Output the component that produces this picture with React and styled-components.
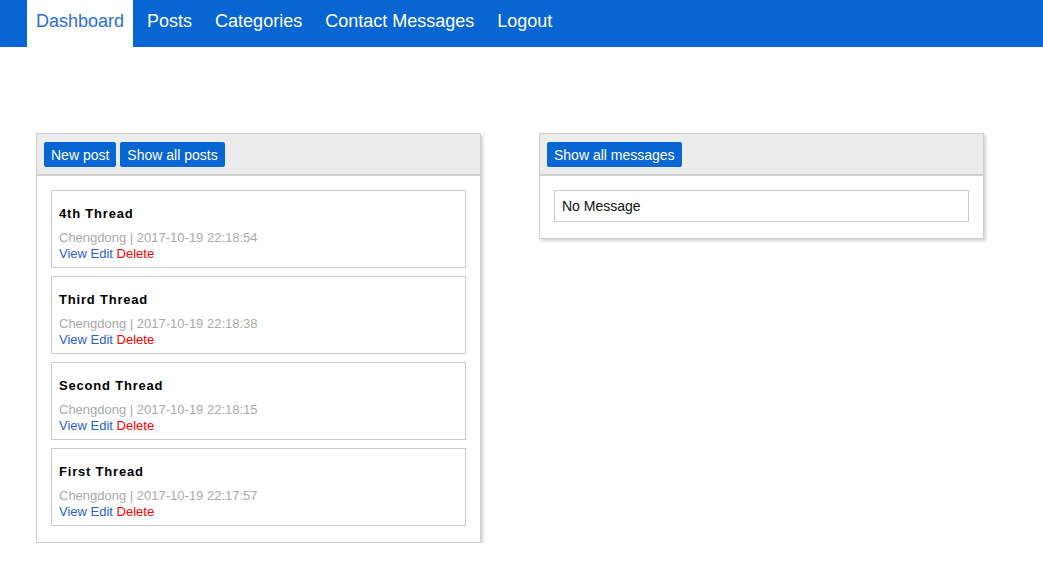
import React from "react";
import styled, { createGlobalStyle } from "styled-components";

const posts = [
  { title: "4th Thread", author: "Chengdong", date: "2017-10-19 22:18:54" },
  { title: "Third Thread", author: "Chengdong", date: "2017-10-19 22:18:38" },
  { title: "Second Thread", author: "Chengdong", date: "2017-10-19 22:18:15" },
  { title: "First Thread", author: "Chengdong", date: "2017-10-19 22:17:57" },
];

const navItems = ["Dashboard", "Posts", "Categories", "Contact Messages", "Logout"];

const App = () => {
  return (
    <>
      <GlobalStyle />
      <NavBar>
        {navItems.map((item, i) => (
          <NavLink key={item} $active={i === 0} href="#">
            {item}
          </NavLink>
        ))}
      </NavBar>
      <Main>
        <Panel>
          <PanelHeader>
            <Button>New post</Button>
            <Button>Show all posts</Button>
          </PanelHeader>
          <PanelBody>
            {posts.map((post) => (
              <PostItem key={post.title}>
                <PostTitle>{post.title}</PostTitle>
                <PostMeta>
                  {post.author} | {post.date}
                </PostMeta>
                <Actions>
                  <ActionLink href="#">View</ActionLink>{" "}
                  <ActionLink href="#">Edit</ActionLink>{" "}
                  <ActionLink href="#" $danger>
                    Delete
                  </ActionLink>
                </Actions>
              </PostItem>
            ))}
          </PanelBody>
        </Panel>
        <Panel>
          <PanelHeader>
            <Button>Show all messages</Button>
          </PanelHeader>
          <PanelBody>
            <MessageBox>No Message</MessageBox>
          </PanelBody>
        </Panel>
      </Main>
    </>
  );
};

const GlobalStyle = createGlobalStyle`
  body {
    margin: 0;
    background: #fff;
    font-family: "Liberation Sans", Arial, sans-serif;
  }
`;

const NavBar = styled.nav`
  height: 47px;
  background-color: #0866d3;
  display: flex;
  align-items: stretch;
  gap: 5px;
  padding-left: 27px;
`;

const NavLink = styled.a`
  display: flex;
  align-items: center;
  padding: 0 9px 4px 9px;
  font-size: 18px;
  text-decoration: none;
  color: ${(p) => (p.$active ? "#2a6fd6" : "#fff")};
  background-color: ${(p) => (p.$active ? "#fff" : "transparent")};
`;

const Main = styled.main`
  display: flex;
  align-items: flex-start;
  gap: 58px;
  padding: 86px 0 0 36px;
`;

const Panel = styled.section`
  width: 443px;
  border: 1px solid #cfcfcf;
  background: #fff;
  box-shadow: 2px 2px 3px rgba(0, 0, 0, 0.18);
`;

const PanelHeader = styled.div`
  background-color: #ececec;
  border-bottom: 2px solid #cfcfcf;
  padding: 8px 7px 7px 7px;
  display: flex;
  gap: 4px;
`;

const Button = styled.button`
  height: 25px;
  padding: 0 7px;
  border: none;
  border-radius: 2px;
  background-color: #0866d3;
  color: #fff;
  font-family: inherit;
  font-size: 14px;
`;

const PanelBody = styled.div`
  padding: 14px 14px 16px 14px;
  display: flex;
  flex-direction: column;
  gap: 8px;
`;

const PostItem = styled.div`
  border: 1px solid #cccccc;
  padding: 8px 8px 5px 7px;
`;

const PostTitle = styled.h4`
  margin: 7px 0 8px 0;
  font-size: 13px;
  line-height: 16px;
  font-weight: bold;
  letter-spacing: 0.8px;
  color: #000;
`;

const PostMeta = styled.div`
  font-size: 13px;
  line-height: 16px;
  color: #aaaaaa;
`;

const Actions = styled.div`
  font-size: 13px;
  line-height: 16px;
`;

const ActionLink = styled.a`
  text-decoration: none;
  color: ${(p) => (p.$danger ? "#ff0000" : "#2a5fd3")};
`;

const MessageBox = styled.div`
  border: 1px solid #cccccc;
  height: 30px;
  padding: 0 7px;
  display: flex;
  align-items: center;
  font-size: 14px;
  color: #111;
`;

export default App;
